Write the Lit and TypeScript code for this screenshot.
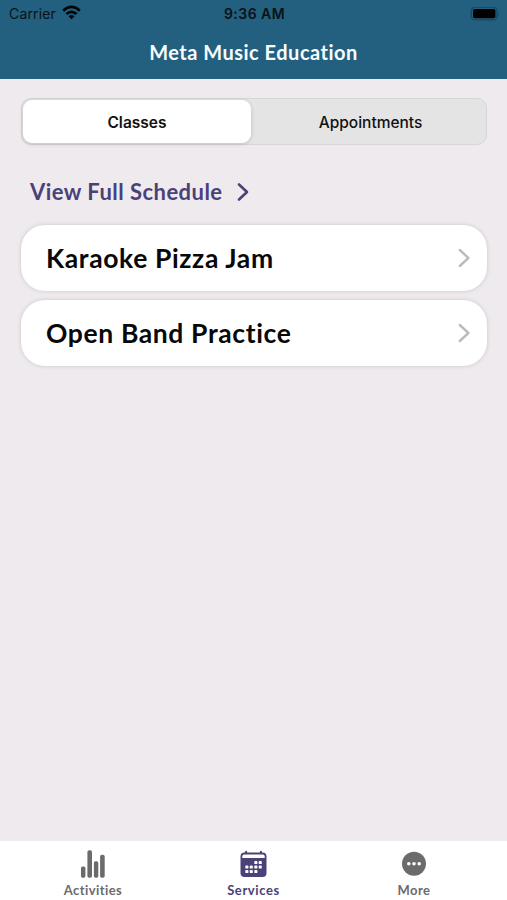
import { LitElement, html, css, svg } from "lit";
import { customElement } from "lit/decorators.js";

const activitiesIcon = svg`
  <rect x="1" y="16.5" width="4.4" height="11.2" rx="1.6"/>
  <rect x="7.4" y="0.3" width="4.6" height="27.4" rx="1.8"/>
  <rect x="13.9" y="11.3" width="4.4" height="16.4" rx="1.6"/>
  <rect x="20.1" y="4.7" width="4.6" height="23" rx="1.8"/>`;

const servicesIcon = svg`
  <rect x="0.5" y="2.5" width="26" height="24.4" rx="4"/>
  <rect x="5.1" y="0.8" width="2" height="4" rx="1"/>
  <rect x="19.9" y="0.8" width="2" height="4" rx="1"/>
  <path d="M2.3 7.9V6.4Q2.3 4.6 4.1 4.6H22.9Q24.7 4.6 24.7 6.4V7.9Z" fill="#fff"/>
  <g fill="#fff">
    ${[[14.3, 11], [18.7, 11], [5.3, 15.5], [9.7, 15.5], [14.3, 15.5], [18.7, 15.5], [5.3, 20], [9.7, 20], [14.3, 20]].map(
      ([x, y]) => svg`<rect x=${x} y=${y} width="3.1" height="3.1" rx="0.9"/>`
    )}
  </g>`;

const moreIcon = svg`
  <circle cx="13" cy="13.8" r="12"/>
  <g fill="#fff"><circle cx="7.8" cy="13.8" r="1.8"/><circle cx="13" cy="13.8" r="1.8"/><circle cx="18.2" cy="13.8" r="1.8"/></g>`;

@customElement("status-bar")
export class StatusBar extends LitElement {
  static styles = css`
    :host {
      display: grid;
      grid-template-columns: 1fr auto 1fr;
      align-items: center;
      height: 27px;
      padding: 0 7px 0 9px;
      box-sizing: border-box;
      font: 14px/27px Inter, sans-serif;
      color: #0a1216;
    }
    .carrier { display: flex; align-items: center; gap: 6px; letter-spacing: 0.15px; }
    .wifi { width: 19px; height: 15px; margin-top: -2px; }
    .time { font-weight: 600; letter-spacing: 0.45px; }
    .battery { justify-self: end; width: 30px; height: 14px; }
  `;
  render() {
    return html`
      <span class="carrier">Carrier
        <svg class="wifi" viewBox="0 0 19 15" fill="none" stroke="#030608" stroke-width="2.7">
          <path d="M1.2 5.7Q9.5 -1.9 17.8 5.7"/>
          <path d="M4.4 9.1Q9.5 4.5 14.6 9.1"/>
          <path d="M9.5 14.2L6.5 11.2Q9.5 8.6 12.5 11.2Z" fill="#030608" stroke="none"/>
        </svg>
      </span>
      <span class="time">9:36 AM</span>
      <svg class="battery" viewBox="0 0 30 14">
        <rect x="1.3" y="0.4" width="25.8" height="12.4" rx="3.6" fill="none" stroke="#184a60" stroke-width="1.3"/>
        <rect x="3" y="2" width="22.4" height="9.2" rx="1.8" fill="#000"/>
        <path d="M28.2 4.7Q30 6.7 28.2 8.7Z" fill="#184a60"/>
      </svg>`;
  }
}

@customElement("service-card")
export class ServiceCard extends LitElement {
  static styles = css`
    :host {
      display: flex;
      align-items: center;
      justify-content: space-between;
      height: 66px;
      padding: 0 17.5px 0 25px;
      box-sizing: border-box;
      border-radius: 24px;
      background: #fff;
      box-shadow: 0 0 4px rgba(60, 60, 60, 0.2);
    }
    .name {
      font: 700 26.5px/36px Lato, sans-serif;
      letter-spacing: 0.62px;
      color: #080808;
      white-space: nowrap;
    }
    .chevron { width: 12px; height: 20px; }
  `;
  render() {
    return html`
      <span class="name"><slot></slot></span>
      <svg class="chevron" viewBox="0 0 12 20" fill="none" stroke="#bcbcbf" stroke-width="2.4" stroke-linecap="round" stroke-linejoin="round">
        <path d="M1.8 2L10.4 10L1.8 18"/>
      </svg>`;
  }
}

@customElement("app-root")
export class AppRoot extends LitElement {
  static styles = css`
    :host {
      display: flex;
      flex-direction: column;
      height: 900px;
      background: #efeaee;
      font-family: Lato, sans-serif;
      overflow: hidden;
    }
    .header { height: 79px; background: #235f7e; flex: none; }
    .title {
      margin: 0;
      text-align: center;
      font: 700 20px/50px Lato, sans-serif;
      letter-spacing: 0.5px;
      color: #f8fcff;
    }
    .content { flex: 1; padding: 19px 20px 0 21px; }
    .segments {
      display: grid;
      grid-template-columns: 228px 1fr;
      height: 47px;
      padding: 1px;
      box-sizing: border-box;
      border: 1px solid #d7d5d9;
      border-radius: 10px;
      background: #e4e4e4;
      font: 500 15.5px/45px Inter, sans-serif;
      text-align: center;
      color: #111;
    }
    .segment { height: 43px; }
    .segment + .segment { padding-left: 5px; }
    .segment.active {
      background: #fff;
      border-radius: 9px;
      box-shadow: 0 1px 4px rgba(0, 0, 0, 0.16);
      font-weight: 600;
    }
    .schedule {
      display: flex;
      align-items: center;
      gap: 14px;
      height: 30px;
      margin: 32px 0 0 9px;
      color: #4a4178;
      font-size: 22px;
      line-height: 28px;
      font-weight: 700;
      letter-spacing: 0.46px;
    }
    .schedule svg { width: 12px; height: 20px; }
    .cards { display: grid; gap: 9px; margin-top: 18px; }
    .tabs {
      display: grid;
      grid-template-columns: repeat(3, 160.5px);
      justify-content: center;
      height: 59px;
      flex: none;
      background: #fff;
    }
    .tab {
      display: flex;
      flex-direction: column;
      align-items: center;
      padding-top: 9px;
      color: #6b6b6b;
      fill: currentColor;
      font: 700 13px/18px Lato, sans-serif;
      letter-spacing: 0.42px;
    }
    .tab svg { width: 27px; height: 28px; margin-bottom: 3px; }
    .tab.active { color: #4a4178; letter-spacing: 0.6px; }
  `;
  private tabs = [
    { name: "Activities", icon: activitiesIcon, active: false },
    { name: "Services", icon: servicesIcon, active: true },
    { name: "More", icon: moreIcon, active: false },
  ];
  render() {
    return html`
      <header class="header">
        <status-bar></status-bar>
        <h1 class="title">Meta Music Education</h1>
      </header>
      <main class="content">
        <div class="segments">
          <div class="segment active">Classes</div>
          <div class="segment">Appointments</div>
        </div>
        <div class="schedule">
          <span>View Full Schedule</span>
          <svg viewBox="0 0 12 20" fill="none" stroke="#4a4178" stroke-width="2.6" stroke-linecap="round" stroke-linejoin="round">
            <path d="M2 2.5L10 10L2 17.5"/>
          </svg>
        </div>
        <div class="cards">
          <service-card>Karaoke Pizza Jam</service-card>
          <service-card>Open Band Practice</service-card>
        </div>
      </main>
      <nav class="tabs">
        ${this.tabs.map(
          (t) => html`<div class="tab ${t.active ? "active" : ""}">
            <svg viewBox="0 0 27 28">${t.icon}</svg>
            <span>${t.name}</span>
          </div>`
        )}
      </nav>`;
  }
}
